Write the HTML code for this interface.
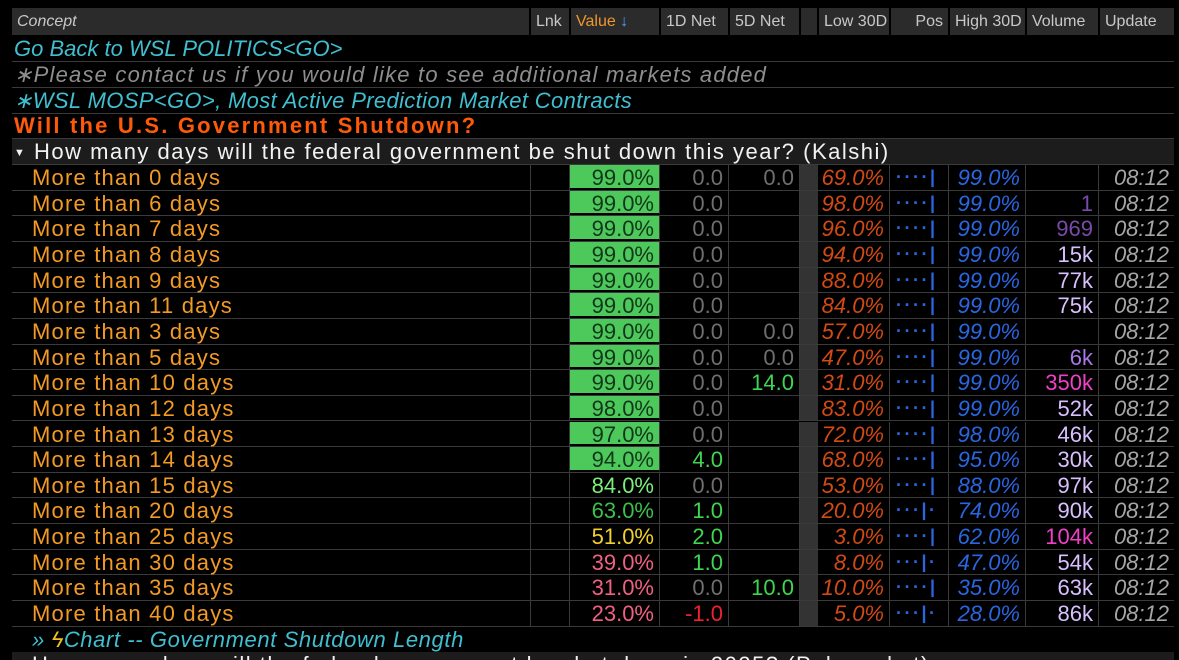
<!DOCTYPE html>
<html><head><meta charset="utf-8"><style>
*{margin:0;padding:0;box-sizing:border-box}
html{width:1179px;height:660px;overflow:hidden}
body{width:1179px;height:660px;background:#000;overflow:hidden;position:relative;font-family:"Liberation Sans",sans-serif;}
.h{position:absolute;top:8px;height:27px;background:#2b2b2b;color:#c8c8c8;font-size:16px;line-height:27px;padding:0 5px;white-space:nowrap;overflow:hidden}
.line{position:absolute;left:12px;width:1162px;height:26px;font-size:22px;line-height:26px;padding-left:2px;border-bottom:1px solid #3a3a3a;white-space:nowrap;overflow:hidden}
.r{position:absolute;left:12px;width:1162px;height:25.65px;border-bottom:1.5px solid #3a3a3a;font-size:22px;line-height:25px;white-space:nowrap}
.c{position:absolute;top:0;height:100%;text-align:right;padding-right:5px;border-right:1.5px solid #3a3a3a}
.n{left:0;width:519px;text-align:left;padding-left:20px;color:#f39a26;letter-spacing:1.2px}
.lk{left:519px;width:39px}
.v{left:558px;width:90px}
.g{background:#4dc95b;color:#12361a;border-bottom:2px solid #000}
.d1{left:648px;width:69px;color:#6f6f6f}
.d5{left:717px;width:71px;color:#6f6f6f}
.gb{left:788px;width:18px;background:#333;border-right:none}
.lo{left:806px;width:72px;color:#d24a14;font-style:italic}
.ps{left:878px;width:59px;text-align:left;padding-left:6px;color:#2a66e0;font-size:18px;letter-spacing:2.5px;font-weight:bold}
.hi{left:937px;width:77px;color:#2a66e0;font-style:italic}
.vo{left:1014px;width:73px;color:#d8c0ff}
.up{left:1087px;width:75px;color:#a6a6a6;font-style:italic;border-right:none}
.gr{color:#3fd64f}
</style></head><body>
<div class="h" style="left:12px;width:517px;font-style:italic">Concept</div>
<div class="h" style="left:531px;width:38px">Lnk</div>
<div class="h" style="left:571px;width:88px;color:#f0962a">Value <span style="color:#4aa0ff">↓</span></div>
<div class="h" style="left:661px;width:67px">1D Net</div>
<div class="h" style="left:730px;width:69px">5D Net</div>
<div class="h" style="left:801px;width:16px"></div>
<div class="h" style="left:819px;width:70px">Low 30D</div>
<div class="h" style="left:891px;width:57px;text-align:right">Pos</div>
<div class="h" style="left:950px;width:75px">High 30D</div>
<div class="h" style="left:1027px;width:71px">Volume</div>
<div class="h" style="left:1100px;width:74px">Update</div>

<div class="line" style="top:36px;color:#3fbfd0;font-style:italic">Go Back to WSL POLITICS&lt;GO&gt;</div>
<div class="line" style="top:62px;color:#8e8e8e;font-style:italic;letter-spacing:1.2px">∗Please contact us if you would like to see additional markets added</div>
<div class="line" style="top:88px;color:#3fbfd0;font-style:italic;letter-spacing:0.35px">∗WSL MOSP&lt;GO&gt;, Most Active Prediction Market Contracts</div>
<div class="line" style="top:113px;color:#ff5a0a;font-weight:bold;font-size:22px;letter-spacing:2.2px">Will the U.S. Government Shutdown?</div>
<div class="line" style="top:139px;color:#f2f2f2;background:#1c1c1c;letter-spacing:1.5px"><span style="font-size:11px;vertical-align:3px">▼</span> How many days will the federal government be shut down this year? (Kalshi)</div>

<div class="r" style="top:165px"><div class="c n">More than 0 days</div><div class="c lk"></div><div class="c v g">99.0%</div><div class="c d1">0.0</div><div class="c d5">0.0</div><div class="c gb"></div><div class="c lo">69.0%</div><div class="c ps">····|</div><div class="c hi">99.0%</div><div class="c vo"></div><div class="c up">08:12</div></div>
<div class="r" style="top:190.65px"><div class="c n">More than 6 days</div><div class="c lk"></div><div class="c v g">99.0%</div><div class="c d1">0.0</div><div class="c d5"></div><div class="c gb"></div><div class="c lo">98.0%</div><div class="c ps">····|</div><div class="c hi">99.0%</div><div class="c vo" style="color:#7a4aa8">1</div><div class="c up">08:12</div></div>
<div class="r" style="top:216.3px"><div class="c n">More than 7 days</div><div class="c lk"></div><div class="c v g">99.0%</div><div class="c d1">0.0</div><div class="c d5"></div><div class="c gb"></div><div class="c lo">96.0%</div><div class="c ps">····|</div><div class="c hi">99.0%</div><div class="c vo" style="color:#7a4aa8">969</div><div class="c up">08:12</div></div>
<div class="r" style="top:241.95px"><div class="c n">More than 8 days</div><div class="c lk"></div><div class="c v g">99.0%</div><div class="c d1">0.0</div><div class="c d5"></div><div class="c gb"></div><div class="c lo">94.0%</div><div class="c ps">····|</div><div class="c hi">99.0%</div><div class="c vo">15k</div><div class="c up">08:12</div></div>
<div class="r" style="top:267.6px"><div class="c n">More than 9 days</div><div class="c lk"></div><div class="c v g">99.0%</div><div class="c d1">0.0</div><div class="c d5"></div><div class="c gb"></div><div class="c lo">88.0%</div><div class="c ps">····|</div><div class="c hi">99.0%</div><div class="c vo">77k</div><div class="c up">08:12</div></div>
<div class="r" style="top:293.25px"><div class="c n">More than 11 days</div><div class="c lk"></div><div class="c v g">99.0%</div><div class="c d1">0.0</div><div class="c d5"></div><div class="c gb"></div><div class="c lo">84.0%</div><div class="c ps">····|</div><div class="c hi">99.0%</div><div class="c vo">75k</div><div class="c up">08:12</div></div>
<div class="r" style="top:318.9px"><div class="c n">More than 3 days</div><div class="c lk"></div><div class="c v g">99.0%</div><div class="c d1">0.0</div><div class="c d5">0.0</div><div class="c gb"></div><div class="c lo">57.0%</div><div class="c ps">····|</div><div class="c hi">99.0%</div><div class="c vo"></div><div class="c up">08:12</div></div>
<div class="r" style="top:344.55px"><div class="c n">More than 5 days</div><div class="c lk"></div><div class="c v g">99.0%</div><div class="c d1">0.0</div><div class="c d5">0.0</div><div class="c gb"></div><div class="c lo">47.0%</div><div class="c ps">····|</div><div class="c hi">99.0%</div><div class="c vo" style="color:#a878e8">6k</div><div class="c up">08:12</div></div>
<div class="r" style="top:370.2px"><div class="c n">More than 10 days</div><div class="c lk"></div><div class="c v g">99.0%</div><div class="c d1">0.0</div><div class="c d5 gr">14.0</div><div class="c gb"></div><div class="c lo">31.0%</div><div class="c ps">····|</div><div class="c hi">99.0%</div><div class="c vo" style="color:#f040c8">350k</div><div class="c up">08:12</div></div>
<div class="r" style="top:395.85px"><div class="c n">More than 12 days</div><div class="c lk"></div><div class="c v g">98.0%</div><div class="c d1">0.0</div><div class="c d5"></div><div class="c gb"></div><div class="c lo">83.0%</div><div class="c ps">····|</div><div class="c hi">99.0%</div><div class="c vo">52k</div><div class="c up">08:12</div></div>
<div class="r" style="top:421.5px"><div class="c n">More than 13 days</div><div class="c lk"></div><div class="c v g">97.0%</div><div class="c d1">0.0</div><div class="c d5"></div><div class="c gb"></div><div class="c lo">72.0%</div><div class="c ps">····|</div><div class="c hi">98.0%</div><div class="c vo">46k</div><div class="c up">08:12</div></div>
<div class="r" style="top:447.15px"><div class="c n">More than 14 days</div><div class="c lk"></div><div class="c v g">94.0%</div><div class="c d1 gr">4.0</div><div class="c d5"></div><div class="c gb"></div><div class="c lo">68.0%</div><div class="c ps">····|</div><div class="c hi">95.0%</div><div class="c vo">30k</div><div class="c up">08:12</div></div>
<div class="r" style="top:472.8px"><div class="c n">More than 15 days</div><div class="c lk"></div><div class="c v" style="color:#7af07a">84.0%</div><div class="c d1">0.0</div><div class="c d5"></div><div class="c gb"></div><div class="c lo">53.0%</div><div class="c ps">····|</div><div class="c hi">88.0%</div><div class="c vo">97k</div><div class="c up">08:12</div></div>
<div class="r" style="top:498.45px"><div class="c n">More than 20 days</div><div class="c lk"></div><div class="c v" style="color:#3cbf48">63.0%</div><div class="c d1 gr">1.0</div><div class="c d5"></div><div class="c gb"></div><div class="c lo">20.0%</div><div class="c ps">···|·</div><div class="c hi">74.0%</div><div class="c vo">90k</div><div class="c up">08:12</div></div>
<div class="r" style="top:524.1px"><div class="c n">More than 25 days</div><div class="c lk"></div><div class="c v" style="color:#f0d030">51.0%</div><div class="c d1 gr">2.0</div><div class="c d5"></div><div class="c gb"></div><div class="c lo">3.0%</div><div class="c ps">····|</div><div class="c hi">62.0%</div><div class="c vo" style="color:#f040c8">104k</div><div class="c up">08:12</div></div>
<div class="r" style="top:549.75px"><div class="c n">More than 30 days</div><div class="c lk"></div><div class="c v" style="color:#f06080">39.0%</div><div class="c d1 gr">1.0</div><div class="c d5"></div><div class="c gb"></div><div class="c lo">8.0%</div><div class="c ps">···|·</div><div class="c hi">47.0%</div><div class="c vo">54k</div><div class="c up">08:12</div></div>
<div class="r" style="top:575.4px"><div class="c n">More than 35 days</div><div class="c lk"></div><div class="c v" style="color:#f06080">31.0%</div><div class="c d1">0.0</div><div class="c d5 gr">10.0</div><div class="c gb"></div><div class="c lo">10.0%</div><div class="c ps">····|</div><div class="c hi">35.0%</div><div class="c vo">63k</div><div class="c up">08:12</div></div>
<div class="r" style="top:601.05px"><div class="c n">More than 40 days</div><div class="c lk"></div><div class="c v" style="color:#f06080">23.0%</div><div class="c d1" style="color:#f02030">-1.0</div><div class="c d5"></div><div class="c gb"></div><div class="c lo">5.0%</div><div class="c ps">···|·</div><div class="c hi">28.0%</div><div class="c vo">86k</div><div class="c up">08:12</div></div>

<div class="line" style="top:627px;color:#3fbfd0;font-style:italic;padding-left:20px;letter-spacing:0.6px">» <span style="color:#f0c020">ϟ</span>Chart -- Government Shutdown Length</div>
<div class="line" style="top:652px;height:8px;color:#f2f2f2;background:#1c1c1c;padding-left:20px;border:none;letter-spacing:1.5px">How many days will the federal government be shut down in 2025? (Polymarket)</div>
</body></html>
